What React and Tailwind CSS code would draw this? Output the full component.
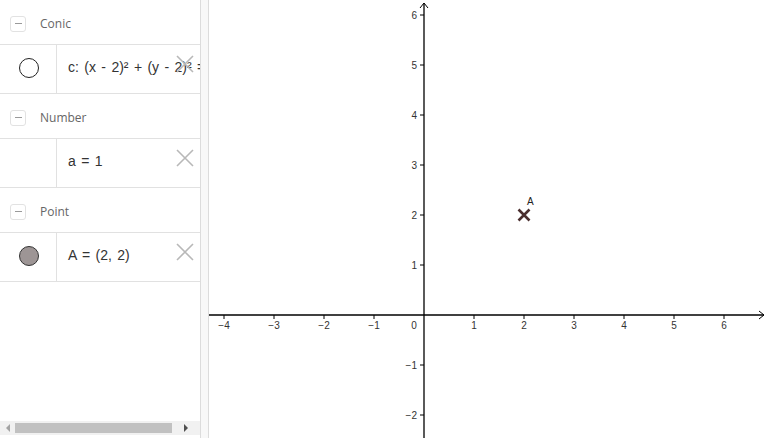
import React from 'react';

// Algebra view groups
const groups = [
  { title: 'Conic', items: [{ marble: 'empty', text: 'c: (x - 2)² + (y - 2)² = 1' }] },
  { title: 'Number', items: [{ marble: null, text: 'a = 1' }] },
  { title: 'Point', items: [{ marble: 'filled', text: 'A = (2, 2)' }] },
];

const O = { x: 424, y: 315 };
const U = 50;

function Marble({ type }) {
  if (type === 'empty') {
    return <div className="w-[20px] h-[20px] rounded-full border border-[#222] bg-white" />;
  }
  if (type === 'filled') {
    return <div className="w-[20px] h-[20px] rounded-full border border-[#333] bg-[#9d9595]" />;
  }
  return null;
}

function CloseIcon() {
  return (
    <svg width="18" height="18" viewBox="0 0 18 18" className="shrink-0">
      <path d="M1 1 L17 17 M17 1 L1 17" stroke="#b8b8b8" strokeWidth="1.6" fill="none" />
    </svg>
  );
}

function AlgebraView() {
  return (
    <div className="w-[200px] h-full flex flex-col bg-white">
      <div className="flex-1 overflow-hidden">
        {groups.map((g) => (
          <div key={g.title}>
            <div className="h-[45px] pt-[3px] flex items-center border-b border-[#e1e1e1]">
              <div className="ml-[10px] w-[16px] h-[16px] rounded-[3px] border border-[#e2e2e2] flex items-center justify-center">
                <div className="w-[7px] h-px bg-[#9a9a9a]" />
              </div>
              <span className="ml-[14px] text-[12px] text-[#666] font-['Open_Sans',sans-serif]">{g.title}</span>
            </div>
            {g.items.map((it, i) => (
              <div key={i} className="h-[49px] flex border-b border-[#e1e1e1]">
                <div className="w-[57px] shrink-0 border-r border-[#e1e1e1] flex items-center justify-center pl-px pb-[3px]">
                  <Marble type={it.marble} />
                </div>
                <div className="relative flex-1 overflow-hidden flex items-center pl-[11px] pb-[3px]">
                  <span className="whitespace-nowrap text-[14px] text-[#333] [word-spacing:1.5px] font-['Liberation_Sans',Arial,sans-serif]">{it.text}</span>
                  <div className="absolute right-[6px] top-[10px]">
                    <CloseIcon />
                  </div>
                </div>
              </div>
            ))}
          </div>
        ))}
      </div>
      <div className="h-[14px] mb-[3px] bg-[#f1f1f1] flex items-center">
        <span className="w-[15px] flex justify-center">
          <span className="w-0 h-0 border-y-[4px] border-y-transparent border-r-[4px] border-r-[#a3a3a3]" />
        </span>
        <div className="w-[157px] h-[10px] bg-[#c1c1c1]" />
        <span className="flex-1 flex justify-center">
          <span className="w-0 h-0 border-y-[4px] border-y-transparent border-l-[4px] border-l-[#505050]" />
        </span>
      </div>
    </div>
  );
}

function Graphics() {
  const xs = [-4, -3, -2, -1, 1, 2, 3, 4, 5, 6];
  const ys = [-2, -1, 1, 2, 3, 4, 5, 6];
  const lab = (n) => (n < 0 ? '\u2212' + Math.abs(n) : String(n));
  return (
    <svg className="flex-1 h-full block" viewBox="209 0 559 438" preserveAspectRatio="none">
      <g stroke="#000" strokeWidth="1.3" fill="none">
        <line x1="209" y1={O.y} x2="764" y2={O.y} />
        <path d={`M759 ${O.y - 4} L764 ${O.y} L759 ${O.y + 4}`} strokeWidth="1" />
        <line x1={O.x} y1="438" x2={O.x} y2="3" />
        <path d={`M${O.x - 4} 8 L${O.x} 3 L${O.x + 4} 8`} strokeWidth="1" />
        {xs.map((n) => (
          <line key={'tx' + n} x1={O.x + n * U} y1={O.y} x2={O.x + n * U} y2={O.y + 4} strokeWidth="1" />
        ))}
        {ys.map((n) => (
          <line key={'ty' + n} x1={O.x - 4} y1={O.y - n * U} x2={O.x} y2={O.y - n * U} strokeWidth="1" />
        ))}
      </g>
      <g fill="#333" fontSize="10" fontFamily="'Liberation Sans', Arial, sans-serif">
        {xs.map((n) => (
          <text key={'lx' + n} x={O.x + n * U} y={O.y + 14} textAnchor="middle">{lab(n)}</text>
        ))}
        <text x={O.x - 10} y={O.y + 14} textAnchor="middle">0</text>
        {ys.map((n) => (
          <text key={'ly' + n} x={O.x - 7} y={O.y - n * U + 4} textAnchor="end">{lab(n)}</text>
        ))}
      </g>
      <path d="M518.5 209.5 L529.5 220.5 M529.5 209.5 L518.5 220.5" stroke="#4a2e2e" strokeWidth="2.6" fill="none" />
      <text x="527" y="205" fontSize="10" fill="#222" fontFamily="'Liberation Sans', Arial, sans-serif">A</text>
    </svg>
  );
}

export default function App() {
  return (
    <div className="w-[768px] h-[438px] flex bg-white overflow-hidden">
      <AlgebraView />
      <div className="w-[9px] h-full bg-[#f8f8f8] border-x border-[#dcdcdc]" />
      <Graphics />
    </div>
  );
}
